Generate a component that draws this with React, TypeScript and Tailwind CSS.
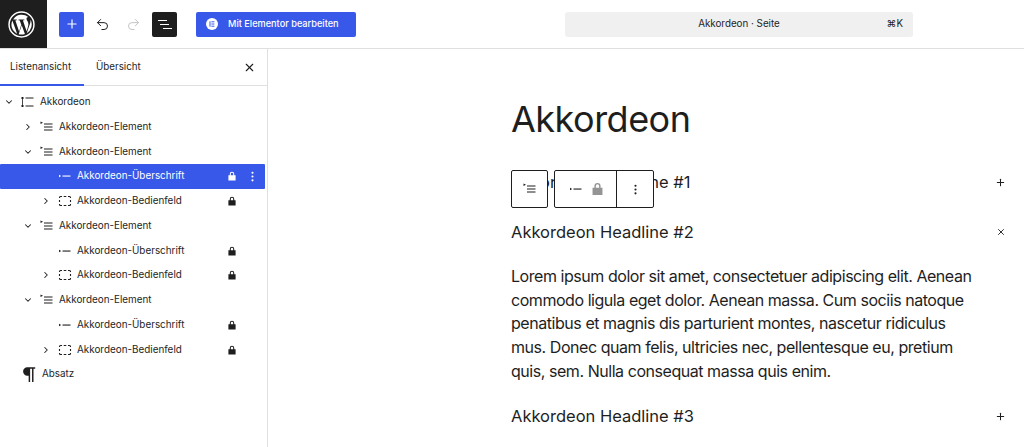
import { ChevronDown, ChevronRight, MoreVertical, Plus, Redo2, Undo2, X } from 'lucide-react';

function BlockIcon({ type, className = '' }: { type: string; className?: string }) {
  if (type === 'accordion') {
    return (
      <svg width="16" height="16" viewBox="0 0 16 16" className={className} fill="currentColor">
        <rect x="1.500" y="3" width="2" height="2" />
        <rect x="1.500" y="11" width="2" height="2" />
        <rect x="2.200" y="5" width="0.800" height="6" />
        <rect x="5.500" y="3.500" width="8" height="1" />
        <rect x="5.500" y="11.500" width="8" height="1" />
      </svg>
    );
  }
  if (type === 'item') {
    return (
      <svg width="16" height="16" viewBox="0 0 16 16" className={className} fill="currentColor">
        <path d="M1.500 2.500l2.500 1.300-2.500 1.300z" />
        <rect x="5" y="4.500" width="8.500" height="1" />
        <rect x="5" y="7.500" width="8.500" height="1" />
        <rect x="5" y="10.500" width="8.500" height="1" />
      </svg>
    );
  }
  if (type === 'heading') {
    return (
      <svg width="16" height="16" viewBox="0 0 16 16" className={className} fill="currentColor">
        <path d="M2 6.700l2.200 1.300L2 9.300z" />
        <rect x="5.500" y="7.500" width="8" height="1.100" />
      </svg>
    );
  }
  if (type === 'panel') {
    return (
      <svg width="16" height="16" viewBox="0 0 16 16" className={className} fill="none" stroke="currentColor" strokeWidth="1.100">
        <path d="M2.500 5V4.500a1 1 0 0 1 1-1h1.500M6.700 3.500h2.600M11 3.500h1.500a1 1 0 0 1 1 1V5M13.500 7v2M13.500 11v.5a1 1 0 0 1-1 1H11M9.300 12.500H6.700M5 12.500H3.500a1 1 0 0 1-1-1V11M2.500 9V7" />
      </svg>
    );
  }
  return (
    <svg width="18" height="18" viewBox="0 0 16 16" className={className} fill="currentColor">
      <path d="M6.500 2h7v1.300H12V15h-1.300V3.300H9V15H7.700V9.500h-1.200a3.750 3.750 0 0 1 0-7.500z" />
    </svg>
  );
}

const rows = [
  { label: 'Akkordeon', icon: 'accordion', depth: 0, arrow: 'down' },
  { label: 'Akkordeon-Element', icon: 'item', depth: 1, arrow: 'right' },
  { label: 'Akkordeon-Element', icon: 'item', depth: 1, arrow: 'down' },
  { label: 'Akkordeon-Überschrift', icon: 'heading', depth: 2, lock: true, active: true },
  { label: 'Akkordeon-Bedienfeld', icon: 'panel', depth: 2, arrow: 'right', lock: true },
  { label: 'Akkordeon-Element', icon: 'item', depth: 1, arrow: 'down' },
  { label: 'Akkordeon-Überschrift', icon: 'heading', depth: 2, lock: true },
  { label: 'Akkordeon-Bedienfeld', icon: 'panel', depth: 2, arrow: 'right', lock: true },
  { label: 'Akkordeon-Element', icon: 'item', depth: 1, arrow: 'down' },
  { label: 'Akkordeon-Überschrift', icon: 'heading', depth: 2, lock: true },
  { label: 'Akkordeon-Bedienfeld', icon: 'panel', depth: 2, arrow: 'right', lock: true },
  { label: 'Absatz', icon: 'para', depth: 0 },
];

const depthPad = ['pl-[1px]', 'pl-[20px]', 'pl-[38px]'];

function SolidLock({ className = '', size = 8 }: { className?: string; size?: number }) {
  return (
    <svg width={size} height={size * 1.25} viewBox="0 0 10 12" className={className} fill="currentColor">
      <path d="M2.200 5V3.400a2.800 2.800 0 0 1 5.600 0V5H9.500v6.500H.5V5zm1.300 0h3V3.400a1.500 1.500 0 0 0-3 0z" />
    </svg>
  );
}

function ListRow({ row }: { row: (typeof rows)[number] }) {
  return (
    <div
      className={`relative flex h-[24.750px] w-[265px] items-center rounded-[1px] ${depthPad[row.depth]} ${
        row.active ? 'bg-[#3858e9] text-white' : 'text-[#1e1e1e]'
      }`}
    >
      <span className="flex w-[16px] justify-center">
        {row.arrow === 'down' && <ChevronDown size={10} strokeWidth={2.5} />}
        {row.arrow === 'right' && <ChevronRight size={10} strokeWidth={2.5} />}
      </span>
      <BlockIcon type={row.icon} className="ml-[3px] shrink-0" />
      <span className="ml-[4px] text-[9.900px] leading-none">{row.label}</span>
      {row.lock && <SolidLock className="absolute left-[228px]" />}
      {row.active && <MoreVertical size={13} className="absolute left-[246px]" />}
    </div>
  );
}

export default function App() {
  return (
    <div className="flex h-[447px] w-[1024px] flex-col overflow-hidden bg-white font-['Inter',sans-serif]">
      <header className="flex h-[49px] shrink-0 items-center border-b border-[#e0e0e0]">
        <div className="flex h-[48px] w-[47px] items-center justify-center bg-[#1e1e1e] pr-[4px]">
          <svg width="27" height="27" viewBox="0 0 26 26" fill="none">
            <circle cx="13" cy="13" r="12" stroke="white" strokeWidth="1.400" />
            <path
              d="M3.300 13c0 3.900 2.300 7.200 5.500 8.800L4.200 9.200A9.700 9.700 0 0 0 3.300 13zm16.300-.500c0-1.200-.4-2-.8-2.700-.5-.8-1-1.500-1-2.300 0-.9.7-1.700 1.600-1.700h.1A9.700 9.700 0 0 0 5 8.300h.6c1 0 2.600-.1 2.600-.1.500 0 .6.700 0 .8 0 0-.5.100-1.100.1l3.600 10.600 2.100-6.400-1.500-4.200c-.5 0-1-.1-1-.1-.5 0-.5-.8.100-.8 0 0 1.600.1 2.500.1 1 0 2.600-.1 2.600-.1.500 0 .6.700 0 .8 0 0-.5.100-1.100.1l3.500 10.500 1-3.300c.4-1.300.7-2.200.7-3zM13.200 13.800l-2.900 8.500a9.700 9.700 0 0 0 6-.2l-.1-.1zm8.400-5.500c0 .3.100.7.100 1 0 1-.2 2.100-.7 3.500l-3 8.600a9.700 9.700 0 0 0 3.600-13.100z"
              fill="white"
            />
          </svg>
        </div>
        <div className="ml-[12px] flex h-[25px] w-[25px] items-center justify-center rounded-[2px] bg-[#3858e9] text-white">
          <Plus size={14} strokeWidth={2} />
        </div>
        <Undo2 size={15} strokeWidth={1.600} className="ml-[11px] text-[#1e1e1e]" />
        <Redo2 size={15} strokeWidth={1.600} className="ml-[16px] text-[#c4c4c4]" />
        <div className="ml-[11px] flex h-[25px] w-[25px] flex-col items-center justify-center gap-[3px] rounded-[2px] bg-[#1e1e1e]">
          <span className="ml-[-5px] h-[1px] w-[9px] bg-white" />
          <span className="ml-[-1px] h-[1px] w-[9px] bg-white" />
          <span className="ml-[5px] h-[1px] w-[9px] bg-white" />
        </div>
        <div className="ml-[19px] flex h-[25px] w-[160px] items-center rounded-[2px] bg-[#3858e9] pl-[10px] text-white">
          <svg width="12" height="12" viewBox="0 0 12 12">
            <circle cx="6" cy="6" r="6" fill="white" />
            <rect x="3.500" y="3.300" width="1" height="5.400" fill="#3858e9" />
            <rect x="5.400" y="3.300" width="3" height="1" fill="#3858e9" />
            <rect x="5.400" y="5.500" width="3" height="1" fill="#3858e9" />
            <rect x="5.400" y="7.700" width="3" height="1" fill="#3858e9" />
          </svg>
          <span className="ml-[10px] text-[9.200px] font-medium">Mit Elementor bearbeiten</span>
        </div>
        <div className="ml-[209px] grid h-[25px] w-[348px] grid-cols-[1fr_auto_1fr] items-center rounded-[3px] bg-[#f0f0f0] text-[9.800px] text-[#1e1e1e]">
          <span />
          <span>Akkordeon · Seite</span>
          <span className="pr-[10px] text-right">⌘K</span>
        </div>
      </header>

      <div className="flex min-h-0 flex-1">
        <aside className="w-[268px] shrink-0 border-r border-[#e0e0e0]">
          <div className="flex h-[37px] items-center border-b border-[#e0e0e0] text-[9.800px] text-[#1e1e1e]">
            <div className="relative flex h-full w-[84px] items-center pl-[10px]">
              Listenansicht
              <span className="absolute bottom-[-1px] left-0 h-[2px] w-[84px] bg-[#3858e9]" />
            </div>
            <div className="pl-[12px]">Übersicht</div>
            <X size={13} strokeWidth={2} className="ml-auto mr-[11px]" />
          </div>
          <div className="flex flex-col pt-[3.750px]">
            {rows.map((row, i) => (
              <ListRow key={i} row={row} />
            ))}
          </div>
        </aside>

        <main className="relative flex-1 overflow-hidden pl-[243px] pr-[18px] text-[#1e1e1e]">
          <h1 className="mt-[47px] text-[36px] leading-[46px] font-normal tracking-[-0.5px]">Akkordeon</h1>
          <div className="mt-[28px] flex h-[24px] items-center justify-between text-[16.500px]">
            <span>Akkordeon Headline #1</span>
            <Plus size={11} strokeWidth={2.200} />
          </div>
          <div className="mt-[26px] flex h-[24px] items-center justify-between text-[16.500px]">
            <span>Akkordeon Headline #2</span>
            <X size={10} strokeWidth={2.200} />
          </div>
          <p className="mt-[21px] w-[465px] text-[16px] leading-[23.700px] tracking-[-0.45px]">
            Lorem ipsum dolor sit amet, consectetuer adipiscing elit. Aenean commodo ligula eget dolor. Aenean massa. Cum sociis natoque penatibus et
            magnis dis parturient montes, nascetur ridiculus mus. Donec quam felis, ultricies nec, pellentesque eu, pretium quis, sem. Nulla consequat
            massa quis enim.
          </p>
          <div className="mt-[21px] flex h-[24px] items-center justify-between text-[16.500px]">
            <span>Akkordeon Headline #3</span>
            <Plus size={11} strokeWidth={2.200} />
          </div>

          <div className="absolute left-[243px] top-[121px] flex gap-[6px]">
            <div className="flex h-[38px] w-[37px] items-center justify-center rounded-[2px] border border-[#1e1e1e] bg-white">
              <BlockIcon type="item" />
            </div>
            <div className="flex h-[38px] rounded-[2px] border border-[#1e1e1e] bg-white">
              <div className="flex w-[61px] items-center justify-center gap-[8px]">
                <BlockIcon type="heading" />
                <SolidLock size={11} className="text-[#949494]" />
              </div>
              <div className="flex w-[37px] items-center justify-center border-l border-[#1e1e1e]">
                <MoreVertical size={13} />
              </div>
            </div>
          </div>
        </main>
      </div>
    </div>
  );
}
